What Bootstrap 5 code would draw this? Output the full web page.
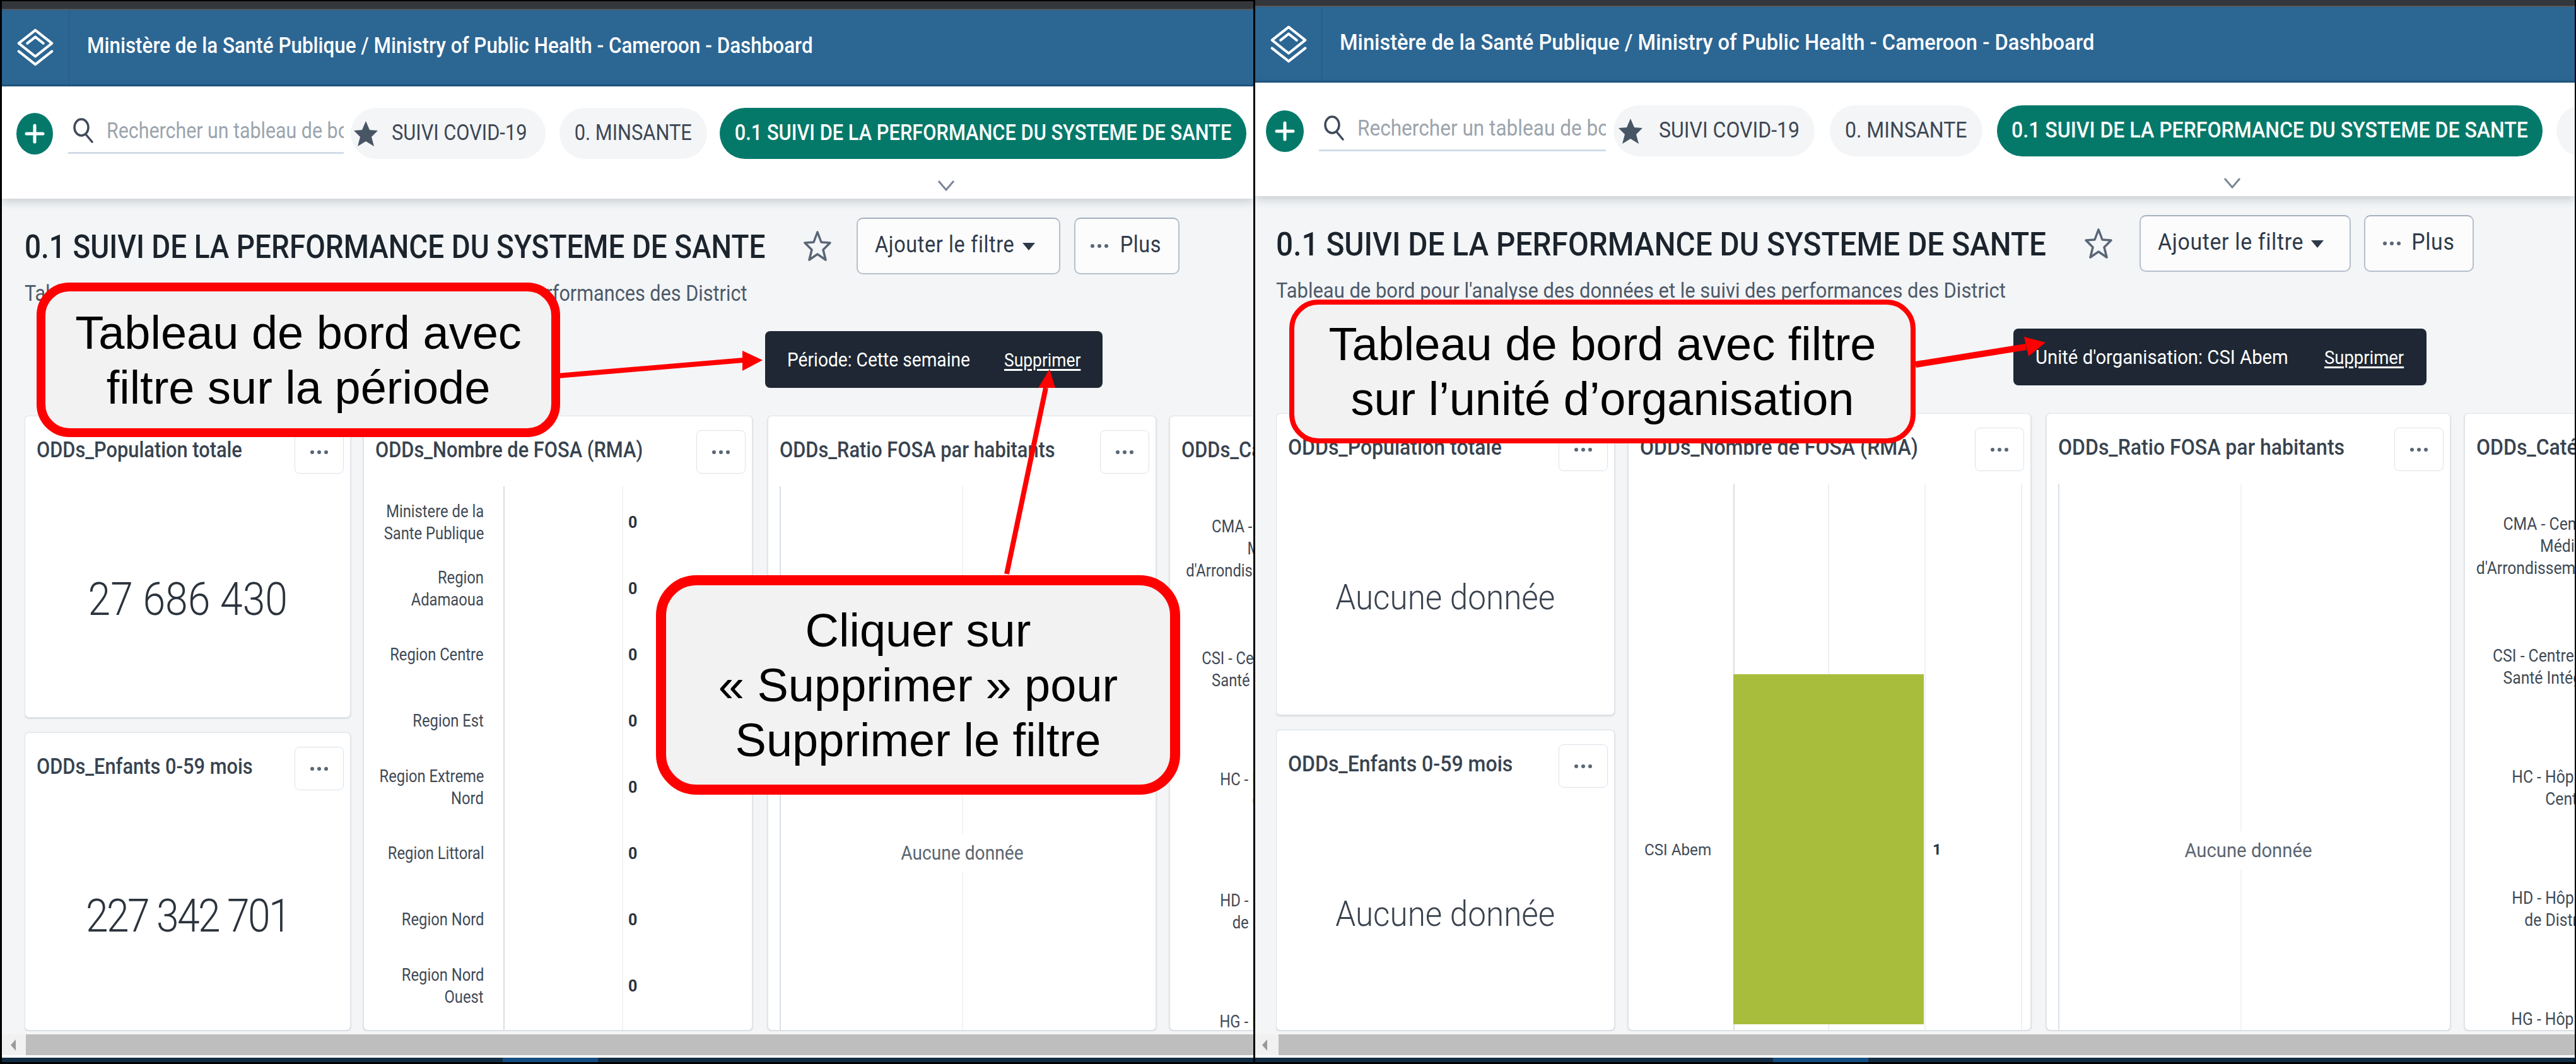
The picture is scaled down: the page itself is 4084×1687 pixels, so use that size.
<!DOCTYPE html>
<html lang="fr">
<head>
<meta charset="utf-8">
<title>Dashboard</title>
<link href="https://cdn.jsdelivr.net/npm/bootstrap@5.3.0/dist/css/bootstrap.min.css" rel="stylesheet">
<style>
html,body{margin:0;background:#000;width:4084px;height:1687px;overflow:hidden;font-family:Roboto,"Liberation Sans",sans-serif;color:#212934}
.screen{width:4084px;height:1687px}
.pane{position:relative;overflow:hidden;height:1687px;background:#f3f5f7;flex:none}
.pane-a{width:1990px;border:solid #000;border-width:2px 3px 3px 3px;--sx:.88}
.pane-b{width:2094px;border:solid #000;border-width:0 2px 3px 0;--sx:.915}
.sq,.sq-c,.sq-r{display:inline-block;white-space:nowrap;transform:scaleX(var(--sx))}
.sq{transform-origin:left center}.sq-c{transform-origin:center}.sq-r{transform-origin:right center}
.bar-dark{background:#33363b;border-bottom:2px solid #55585c;flex:none}
.pane-a .bar-dark{height:14px}.pane-b .bar-dark{height:11px}
.hdr{background:#2c6693;border-bottom:3px solid #1f5580;color:#fff;flex:none;padding:0}
.pane-a .hdr{height:121px}.pane-b .hdr{height:120px}
.logo-cell{height:100%;border-right:1px solid #27598a;flex:none}
.pane-a .logo-cell{width:107px}.pane-b .logo-cell{width:106px}
.logo-cell svg{width:58px;height:60px}
.hdr-title{font-size:35.7px;font-weight:500;padding:0 0 4px 28px}
.tabs-bar{background:#fff;flex:none;position:relative;z-index:1;box-shadow:0 5px 14px rgba(30,40,50,.2)}
.pane-a .tabs-bar{height:178px;padding:34px 0 0 23px}
.pane-b .tabs-bar{height:180px;padding:36px 0 0 17px}
.tab-row{height:81px}
.add-btn{background:#04796a;border:0;padding:0;flex:none;height:66px;border-radius:50%;color:#fff}
.pane-a .add-btn{width:58px}.pane-b .add-btn{width:60px}
.add-btn svg{width:34px;height:34px}
.finder{height:81px;flex:none;position:relative;padding-top:12px;overflow:hidden}
.finder:after{content:"";position:absolute;left:0;right:0;top:70px;height:3px;background:#d3dce6}
.pane-a .finder{width:437px;margin-left:24px}.pane-b .finder{width:455px;margin-left:24px}
.finder svg{width:34px;height:42px;margin:2px 0 0 7px;flex:none}
.finder-text{font-size:34.5px;color:#9ba4ad;margin-left:20px;height:48px;line-height:48px;width:460px;overflow:hidden}
.chip{height:81px;border-radius:44px;background:#f3f5f7;border:0;font-size:35px;color:#3d4753;padding:0;flex:none;overflow:hidden}
.chip.on{background:#04796a;color:#fff;font-weight:500;font-size:35px}
.chip svg{width:40px;height:44px;flex:none}
.pane-a .chip-1{width:309px;margin-left:11px}.pane-a .chip-2{width:234px;margin-left:22px}.pane-a .chip-3{width:835px;margin-left:20px}
.pane-b .chip-1{width:319px;margin-left:12px}.pane-b .chip-2{width:242px;margin-left:24px}.pane-b .chip-3{width:865px;margin-left:23px}.pane-b .chip-4{width:160px;margin-left:22px}
.star-box{width:54px;margin-right:18px}
.chev{display:block;width:28px;height:18px;margin-top:33px}
.pane-a .chev{margin-left:1460px}.pane-b .chev{margin-left:1518px}
.content{flex:1 1 auto;min-height:0;overflow:hidden;padding-top:30px;padding-bottom:5px}
.pane-a .content{padding-left:36px}.pane-b .content{padding-left:33px}
.head-row{height:90px;flex:none}
.dash-title{font-size:52.2px;font-weight:500;color:#1b232c;line-height:1;margin:0;padding-top:5px;flex:none}
.pane-a .dash-title{width:1235px}.pane-b .dash-title{width:1282px}
.fav{width:44px;height:50px;flex:none}
.act{background:#fcfcfd;border:2px solid #b6c0cc;border-top-color:#a5b0be;border-radius:10px;height:90px;font-size:36px;letter-spacing:.7px;color:#2f3a48;padding:0 0 5px;flex:none}
.pane-a .act{--sx:.9}.pane-b .act{--sx:.94}
.act:hover{background:#fcfcfd;border-color:#b6c0cc}
.pane-a .act-1{width:323px;margin-left:40px;padding-left:27px}.pane-a .act-2{width:167px;margin-left:22px}
.pane-b .act-1{width:335px;margin-left:43px;padding-left:27px}.pane-b .act-2{width:174px;margin-left:21px}
.act-2{font-size:36px}
.act svg.caret{width:22px;height:14px;margin-top:6px}
.act svg.dots{width:30px;height:10px;margin:4px 14px 0 0}
.pane-a .act-label{width:233px}.pane-b .act-label{width:242px}
.sub-line{color:#4d5968;line-height:30px;margin-top:15px;flex:none}
.pane-a .sub-line{font-size:34.8px}.pane-b .sub-line{font-size:33.8px}
.filter-row{margin-top:45px;height:90px;flex:none}
.fpill{background:#1e2733;color:#fff;height:90px;border-radius:8px;font-size:32px;padding-left:35px;flex:none}
.fpill u{font-size:30px;text-underline-offset:4px}
.pane-a .fpill{width:535px;margin-left:1174px}.pane-b .fpill{width:655px;margin-left:1169px}
.pane-a .flabel{width:344px}.pane-b .flabel{width:458px}
.board{margin-top:44px;flex:1 1 auto;min-height:0;overflow:hidden;padding:0 0 1px 0}
.tile{background:#fff;border:1px solid #dfe3e8;border-radius:7px;box-shadow:0 1px 3px rgba(40,50,60,.2);overflow:hidden;flex:none}
.stack{flex:none}
.pane-a .stack{width:517px}.pane-b .stack{width:537px}
.stack .tile{height:479px;margin-bottom:23px;position:relative}
.stack .tile.tall{flex:1 1 auto;height:auto;min-height:0;margin-bottom:0}
.pane-a .w3{width:617px;margin-left:20px}.pane-a .w4{width:616px;margin-left:24px}.pane-a .w5{width:500px;margin-left:21px}
.pane-b .w3{width:639px;margin-left:21px}.pane-b .w4{width:641px;margin-left:24px}.pane-b .w5{width:500px;margin-left:22px}
.tile-head{height:111px;padding:22px 10px 0 18px}
.tile-title{font-size:35px;font-weight:500;color:#38434f;height:69px;line-height:64px;min-width:0}
.pane-a .w3 .tile-title,.pane-a .w4 .tile-title{width:480px}
.dots-btn{width:78px;height:69px;flex:none;background:#fff;border:1px solid #dce2e8;border-radius:8px;padding:0}
.dots-btn:hover{background:#fff;border-color:#dce2e8}
.dots-btn svg{width:30px;height:10px}
.big-val{font-size:73px;font-weight:300;color:#2b333d;height:368px;padding-bottom:8px}
.tight-val{letter-spacing:-3px}
.nodata-big{font-size:56px;font-weight:300;color:#3a434e}
.cax{position:relative;height:1000px}
.cax-a{background:linear-gradient(#d9e0e8,#d9e0e8) 221px 0/2px 100% no-repeat,linear-gradient(#f1f3f5,#f1f3f5) 409px 0/2px 100% no-repeat;padding-top:5px}
.cax-b{background:linear-gradient(#d9e0e8,#d9e0e8) 166px 0/2px 100% no-repeat,linear-gradient(#eef1f4,#eef1f4) 316px 0/2px 100% no-repeat,linear-gradient(#eef1f4,#eef1f4) 469px 0/2px 100% no-repeat,linear-gradient(#eef1f4,#eef1f4) 622px 0/2px 100% no-repeat;padding-top:302px}
.cax-c{background:linear-gradient(#d9e0e8,#d9e0e8) 18px 0/2px 100% no-repeat,linear-gradient(#f1f3f5,#f1f3f5) 307px 0/2px 100% no-repeat}
.nodata-wrap{height:1162px;width:100%}
.nodata-sm{font-size:32px;color:#5b6672;background:#fff;padding:6px 0}
.crow{height:105px}
.clbl{width:190px;flex:none;text-align:right;font-size:27px;line-height:35px;color:#3f4a56}
.cval{margin-left:229px;font-size:25px;font-weight:700;color:#2b333d}
.brow{height:555px}
.blbl{width:131px;flex:none;text-align:right;font-size:26.5px;color:#3f4a56}
.bbar{width:302px;height:555px;background:#a9bd3c;margin-left:35px;flex:none}
.bval{margin-left:14px;font-size:24px;font-weight:700;color:#2b333d}
.drow{height:192px}
.dlbl{width:206px;flex:none;text-align:right;font-size:27px;line-height:35px;color:#3f4a56}
.cax-d{padding-top:3px;height:1000px}
.scroller{height:33px;background:#f1f1f1;flex:none;position:relative;z-index:1}
.scroll-arrow{flex:none;width:10px;height:20px}
.pane-a .scroll-arrow{margin:0 15px 0 13px}.pane-b .scroll-arrow{margin:0 17px 0 10px}
.thumb{background:#bebebe;height:33px;flex:1}
.strip-w{height:4px;background:#fff;flex:none;position:relative;z-index:1}
.task{height:7px;background:#122c44;flex:none;position:relative;z-index:1}
.task i{display:block;height:7px;width:151px;background:#154e82}
.pane-a .task i{margin-left:794px}.pane-b .task i{margin-left:821px}
.call{position:absolute;z-index:3;background:#f2f2f2;border:14px solid #f00;border-radius:52px;font-family:"Liberation Sans",Arial,sans-serif;font-size:74px;line-height:87px;color:#000;text-align:center}
.call-1{left:55px;top:446px;width:830px;height:245px}
.call-2{left:1037px;top:910px;width:831px;height:348px;border-width:16px;border-radius:64px}
.call-3{left:54px;top:475px;width:993px;height:228px;border-width:8px;border-radius:46px}
.arrows{position:absolute;left:0;top:0;width:100%;height:100%;z-index:2;pointer-events:none}
</style>
</head>
<body>
<div class="screen d-flex">

<section class="pane pane-a d-flex flex-column">
  <div class="bar-dark"></div>
  <header class="hdr d-flex align-items-center">
    <div class="logo-cell d-flex align-items-center justify-content-center">
      <svg viewBox="0 0 64 66" fill="none" stroke="#fff" stroke-width="4.5" stroke-linejoin="round" stroke-linecap="round"><path d="M32 3 61 26 32 49 3 26Z"/><path d="M18 26 32 15 46 26"/><path d="M3 40 32 63 61 40"/></svg>
    </div>
    <div class="hdr-title"><span class="sq">Ministère de la Santé Publique / Ministry of Public Health - Cameroon - Dashboard</span></div>
  </header>
  <nav class="tabs-bar">
    <div class="tab-row d-flex align-items-center">
      <button class="add-btn d-flex align-items-center justify-content-center" type="button"><svg viewBox="0 0 34 34" stroke="#fff" stroke-width="5" stroke-linecap="round"><path d="M17 4V30M4 17H30"/></svg></button>
      <div class="finder d-flex align-items-start">
        <svg viewBox="0 0 34 42" fill="none" stroke="#3f4a5a" stroke-width="3.5" stroke-linecap="round"><ellipse cx="14" cy="17" rx="11" ry="13"/><path d="M21 28 31 40"/></svg>
        <div class="finder-text"><span class="sq">Rechercher un tableau de bord</span></div>
      </div>
      <button class="chip chip-1 btn d-flex align-items-center" type="button"><span class="star-box d-flex justify-content-center"><svg viewBox="0 0 40 44"><path fill="#485565" d="M20 2 26 16 39 17 29 27 33 42 20 34 7 42 11 27 1 17 14 16Z"/></svg></span><span class="sq">SUIVI COVID-19</span></button>
      <button class="chip chip-2 btn d-flex align-items-center justify-content-center" type="button"><span class="sq-c">0. MINSANTE</span></button>
      <button class="chip chip-3 on btn d-flex align-items-center justify-content-center" type="button"><span class="sq-c">0.1 SUIVI DE LA PERFORMANCE DU SYSTEME DE SANTE</span></button>
    </div>
    <svg class="chev" viewBox="0 0 28 18" fill="none" stroke="#7a8694" stroke-width="3"><path d="M2 2 14 16 26 2"/></svg>
  </nav>
  <main class="content d-flex flex-column">
    <div class="head-row d-flex align-items-center">
      <h1 class="dash-title"><span class="sq">0.1 SUIVI DE LA PERFORMANCE DU SYSTEME DE SANTE</span></h1>
      <svg class="fav" viewBox="0 0 44 50" fill="none" stroke="#5a6676" stroke-width="3.5" stroke-linejoin="round"><path d="M22 3 28 19 42 20 31 31 35 47 22 38 9 47 13 31 2 20 16 19Z"/></svg>
      <button class="act act-1 btn d-flex align-items-center" type="button"><span class="act-label"><span class="sq">Ajouter le filtre</span></span><svg class="caret" viewBox="0 0 22 14"><path fill="#2f3a48" d="M1 1H21L11 13Z"/></svg></button>
      <button class="act act-2 btn d-flex align-items-center justify-content-center" type="button"><svg class="dots" viewBox="0 0 30 10" fill="#5a6676"><circle cx="4" cy="5" r="3"/><circle cx="15" cy="5" r="3"/><circle cx="26" cy="5" r="3"/></svg><span class="sq-c">Plus</span></button>
    </div>
    <p class="sub-line mb-0"><span class="sq">Tableau de bord pour l'analyse des données et le suivi des performances des District</span></p>
    <div class="filter-row d-flex">
      <div class="fpill d-flex align-items-center"><span class="flabel"><span class="sq">Période: Cette semaine</span></span><u class="sq">Supprimer</u></div>
    </div>
    <div class="board d-flex align-items-stretch">
      <div class="stack d-flex flex-column">
        <article class="tile">
          <div class="tile-head d-flex justify-content-between"><div class="tile-title"><span class="sq">ODDs_Population totale</span></div><button class="dots-btn btn d-flex align-items-center justify-content-center" type="button"><svg viewBox="0 0 30 10" fill="#5a6676"><circle cx="4" cy="5" r="3"/><circle cx="15" cy="5" r="3"/><circle cx="26" cy="5" r="3"/></svg></button></div>
          <div class="big-val d-flex align-items-center justify-content-center"><span class="sq-c">27 686 430</span></div>
        </article>
        <article class="tile tall">
          <div class="tile-head d-flex justify-content-between"><div class="tile-title"><span class="sq">ODDs_Enfants 0-59 mois</span></div><button class="dots-btn btn d-flex align-items-center justify-content-center" type="button"><svg viewBox="0 0 30 10" fill="#5a6676"><circle cx="4" cy="5" r="3"/><circle cx="15" cy="5" r="3"/><circle cx="26" cy="5" r="3"/></svg></button></div>
          <div class="big-val d-flex align-items-center justify-content-center"><span class="sq-c tight-val">227 342 701</span></div>
        </article>
      </div>
      <article class="tile w3">
        <div class="tile-head d-flex justify-content-between"><div class="tile-title"><span class="sq">ODDs_Nombre de FOSA (RMA)</span></div><button class="dots-btn btn d-flex align-items-center justify-content-center" type="button"><svg viewBox="0 0 30 10" fill="#5a6676"><circle cx="4" cy="5" r="3"/><circle cx="15" cy="5" r="3"/><circle cx="26" cy="5" r="3"/></svg></button></div>
        <div class="cax cax-a">
          <div class="crow d-flex align-items-center"><div class="clbl"><span class="sq-r">Ministere de la</span><br><span class="sq-r">Sante Publique</span></div><span class="cval">0</span></div>
          <div class="crow d-flex align-items-center"><div class="clbl"><span class="sq-r">Region</span><br><span class="sq-r">Adamaoua</span></div><span class="cval">0</span></div>
          <div class="crow d-flex align-items-center"><div class="clbl"><span class="sq-r">Region Centre</span></div><span class="cval">0</span></div>
          <div class="crow d-flex align-items-center"><div class="clbl"><span class="sq-r">Region Est</span></div><span class="cval">0</span></div>
          <div class="crow d-flex align-items-center"><div class="clbl"><span class="sq-r">Region Extreme</span><br><span class="sq-r">Nord</span></div><span class="cval">0</span></div>
          <div class="crow d-flex align-items-center"><div class="clbl"><span class="sq-r">Region Littoral</span></div><span class="cval">0</span></div>
          <div class="crow d-flex align-items-center"><div class="clbl"><span class="sq-r">Region Nord</span></div><span class="cval">0</span></div>
          <div class="crow d-flex align-items-center"><div class="clbl"><span class="sq-r">Region Nord</span><br><span class="sq-r">Ouest</span></div><span class="cval">0</span></div>
        </div>
      </article>
      <article class="tile w4">
        <div class="tile-head d-flex justify-content-between"><div class="tile-title"><span class="sq">ODDs_Ratio FOSA par habitants</span></div><button class="dots-btn btn d-flex align-items-center justify-content-center" type="button"><svg viewBox="0 0 30 10" fill="#5a6676"><circle cx="4" cy="5" r="3"/><circle cx="15" cy="5" r="3"/><circle cx="26" cy="5" r="3"/></svg></button></div>
        <div class="cax cax-c"><div class="nodata-wrap d-flex align-items-center justify-content-center"><span class="nodata-sm sq-c">Aucune donnée</span></div></div>
      </article>
      <article class="tile w5">
        <div class="tile-head"><div class="tile-title"><span class="sq">ODDs_Catégorie des FOSA</span></div></div>
        <div class="cax cax-d">
          <div class="drow d-flex align-items-center"><div class="dlbl"><span class="sq-r">CMA - Centre</span><br><span class="sq-r">Médical</span><br><span class="sq-r">d'Arrondissement</span></div></div>
          <div class="drow d-flex align-items-center"><div class="dlbl"><span class="sq-r">CSI - Centre de</span><br><span class="sq-r">Santé Intégré</span></div></div>
          <div class="drow d-flex align-items-center"><div class="dlbl"><span class="sq-r">HC - Hôpital</span><br><span class="sq-r">Central</span></div></div>
          <div class="drow d-flex align-items-center"><div class="dlbl"><span class="sq-r">HD - Hôpital</span><br><span class="sq-r">de District</span></div></div>
          <div class="drow d-flex align-items-center"><div class="dlbl"><span class="sq-r">HG - Hôpital</span><br><span class="sq-r">Général</span></div></div>
        </div>
      </article>
    </div>
  </main>
  <div class="scroller d-flex align-items-center"><svg class="scroll-arrow" viewBox="0 0 10 20"><path fill="#9a9a9a" d="M9 1V19L1 10Z"/></svg><div class="thumb"></div></div>
  <div class="strip-w"></div>
  <div class="task"><i></i></div>
  <svg class="arrows" viewBox="0 0 1984 1682" preserveAspectRatio="none">
    <path d="M880 594 1176 569" stroke="#f00" stroke-width="8" fill="none"/>
    <path fill="#f00" d="M1206 569 1174 554 1174 586Z"/>
    <path d="M1655 613 1593 908" stroke="#f00" stroke-width="8" fill="none"/>
    <path fill="#f00" d="M1661 583 1643 613 1670 613Z"/>
  </svg>
  <div class="call call-1 d-flex align-items-center justify-content-center"><div>Tableau de bord avec<br>filtre sur la période</div></div>
  <div class="call call-2 d-flex align-items-center justify-content-center"><div>Cliquer sur<br>« Supprimer » pour<br>Supprimer le filtre</div></div>
</section>

<section class="pane pane-b d-flex flex-column">
  <div class="bar-dark"></div>
  <header class="hdr d-flex align-items-center">
    <div class="logo-cell d-flex align-items-center justify-content-center">
      <svg viewBox="0 0 64 66" fill="none" stroke="#fff" stroke-width="4.5" stroke-linejoin="round" stroke-linecap="round"><path d="M32 3 61 26 32 49 3 26Z"/><path d="M18 26 32 15 46 26"/><path d="M3 40 32 63 61 40"/></svg>
    </div>
    <div class="hdr-title"><span class="sq">Ministère de la Santé Publique / Ministry of Public Health - Cameroon - Dashboard</span></div>
  </header>
  <nav class="tabs-bar">
    <div class="tab-row d-flex align-items-center">
      <button class="add-btn d-flex align-items-center justify-content-center" type="button"><svg viewBox="0 0 34 34" stroke="#fff" stroke-width="5" stroke-linecap="round"><path d="M17 4V30M4 17H30"/></svg></button>
      <div class="finder d-flex align-items-start">
        <svg viewBox="0 0 34 42" fill="none" stroke="#3f4a5a" stroke-width="3.5" stroke-linecap="round"><ellipse cx="14" cy="17" rx="11" ry="13"/><path d="M21 28 31 40"/></svg>
        <div class="finder-text"><span class="sq">Rechercher un tableau de bord</span></div>
      </div>
      <button class="chip chip-1 btn d-flex align-items-center" type="button"><span class="star-box d-flex justify-content-center"><svg viewBox="0 0 40 44"><path fill="#485565" d="M20 2 26 16 39 17 29 27 33 42 20 34 7 42 11 27 1 17 14 16Z"/></svg></span><span class="sq">SUIVI COVID-19</span></button>
      <button class="chip chip-2 btn d-flex align-items-center justify-content-center" type="button"><span class="sq-c">0. MINSANTE</span></button>
      <button class="chip chip-3 on btn d-flex align-items-center justify-content-center" type="button"><span class="sq-c">0.1 SUIVI DE LA PERFORMANCE DU SYSTEME DE SANTE</span></button>
      <div class="chip chip-4"></div>
    </div>
    <svg class="chev" viewBox="0 0 28 18" fill="none" stroke="#7a8694" stroke-width="3"><path d="M2 2 14 16 26 2"/></svg>
  </nav>
  <main class="content d-flex flex-column">
    <div class="head-row d-flex align-items-center">
      <h1 class="dash-title"><span class="sq">0.1 SUIVI DE LA PERFORMANCE DU SYSTEME DE SANTE</span></h1>
      <svg class="fav" viewBox="0 0 44 50" fill="none" stroke="#5a6676" stroke-width="3.5" stroke-linejoin="round"><path d="M22 3 28 19 42 20 31 31 35 47 22 38 9 47 13 31 2 20 16 19Z"/></svg>
      <button class="act act-1 btn d-flex align-items-center" type="button"><span class="act-label"><span class="sq">Ajouter le filtre</span></span><svg class="caret" viewBox="0 0 22 14"><path fill="#2f3a48" d="M1 1H21L11 13Z"/></svg></button>
      <button class="act act-2 btn d-flex align-items-center justify-content-center" type="button"><svg class="dots" viewBox="0 0 30 10" fill="#5a6676"><circle cx="4" cy="5" r="3"/><circle cx="15" cy="5" r="3"/><circle cx="26" cy="5" r="3"/></svg><span class="sq-c">Plus</span></button>
    </div>
    <p class="sub-line mb-0"><span class="sq">Tableau de bord pour l'analyse des données et le suivi des performances des District</span></p>
    <div class="filter-row d-flex">
      <div class="fpill d-flex align-items-center"><span class="flabel"><span class="sq">Unité d'organisation: CSI Abem</span></span><u class="sq">Supprimer</u></div>
    </div>
    <div class="board d-flex align-items-stretch">
      <div class="stack d-flex flex-column">
        <article class="tile">
          <div class="tile-head d-flex justify-content-between"><div class="tile-title"><span class="sq">ODDs_Population totale</span></div><button class="dots-btn btn d-flex align-items-center justify-content-center" type="button"><svg viewBox="0 0 30 10" fill="#5a6676"><circle cx="4" cy="5" r="3"/><circle cx="15" cy="5" r="3"/><circle cx="26" cy="5" r="3"/></svg></button></div>
          <div class="big-val d-flex align-items-center justify-content-center"><span class="nodata-big sq-c">Aucune donnée</span></div>
        </article>
        <article class="tile tall">
          <div class="tile-head d-flex justify-content-between"><div class="tile-title"><span class="sq">ODDs_Enfants 0-59 mois</span></div><button class="dots-btn btn d-flex align-items-center justify-content-center" type="button"><svg viewBox="0 0 30 10" fill="#5a6676"><circle cx="4" cy="5" r="3"/><circle cx="15" cy="5" r="3"/><circle cx="26" cy="5" r="3"/></svg></button></div>
          <div class="big-val d-flex align-items-center justify-content-center"><span class="nodata-big sq-c">Aucune donnée</span></div>
        </article>
      </div>
      <article class="tile w3">
        <div class="tile-head d-flex justify-content-between"><div class="tile-title"><span class="sq">ODDs_Nombre de FOSA (RMA)</span></div><button class="dots-btn btn d-flex align-items-center justify-content-center" type="button"><svg viewBox="0 0 30 10" fill="#5a6676"><circle cx="4" cy="5" r="3"/><circle cx="15" cy="5" r="3"/><circle cx="26" cy="5" r="3"/></svg></button></div>
        <div class="cax cax-b">
          <div class="brow d-flex align-items-center"><div class="blbl"><span class="sq-r">CSI Abem</span></div><div class="bbar"></div><span class="bval">1</span></div>
        </div>
      </article>
      <article class="tile w4">
        <div class="tile-head d-flex justify-content-between"><div class="tile-title"><span class="sq">ODDs_Ratio FOSA par habitants</span></div><button class="dots-btn btn d-flex align-items-center justify-content-center" type="button"><svg viewBox="0 0 30 10" fill="#5a6676"><circle cx="4" cy="5" r="3"/><circle cx="15" cy="5" r="3"/><circle cx="26" cy="5" r="3"/></svg></button></div>
        <div class="cax cax-c"><div class="nodata-wrap d-flex align-items-center justify-content-center"><span class="nodata-sm sq-c">Aucune donnée</span></div></div>
      </article>
      <article class="tile w5">
        <div class="tile-head"><div class="tile-title"><span class="sq">ODDs_Catégorie des FOSA</span></div></div>
        <div class="cax cax-d">
          <div class="drow d-flex align-items-center"><div class="dlbl"><span class="sq-r">CMA - Centre</span><br><span class="sq-r">Médical</span><br><span class="sq-r">d'Arrondissement</span></div></div>
          <div class="drow d-flex align-items-center"><div class="dlbl"><span class="sq-r">CSI - Centre de</span><br><span class="sq-r">Santé Intégré</span></div></div>
          <div class="drow d-flex align-items-center"><div class="dlbl"><span class="sq-r">HC - Hôpital</span><br><span class="sq-r">Central</span></div></div>
          <div class="drow d-flex align-items-center"><div class="dlbl"><span class="sq-r">HD - Hôpital</span><br><span class="sq-r">de District</span></div></div>
          <div class="drow d-flex align-items-center"><div class="dlbl"><span class="sq-r">HG - Hôpital</span><br><span class="sq-r">Général</span></div></div>
        </div>
      </article>
    </div>
  </main>
  <div class="scroller d-flex align-items-center"><svg class="scroll-arrow" viewBox="0 0 10 20"><path fill="#9a9a9a" d="M9 1V19L1 10Z"/></svg><div class="thumb"></div></div>
  <div class="strip-w"></div>
  <div class="task"><i></i></div>
  <svg class="arrows" viewBox="0 0 2092 1684" preserveAspectRatio="none">
    <path d="M1047 578 1222 550" stroke="#f00" stroke-width="10" fill="none"/>
    <path fill="#f00" d="M1253 543 1219 534 1226 565Z"/>
  </svg>
  <div class="call call-3 d-flex align-items-center justify-content-center"><div>Tableau de bord avec filtre<br>sur l’unité d’organisation</div></div>
</section>

</div>
<script src="https://cdn.jsdelivr.net/npm/bootstrap@5.3.0/dist/js/bootstrap.bundle.min.js"></script>
</body>
</html>
